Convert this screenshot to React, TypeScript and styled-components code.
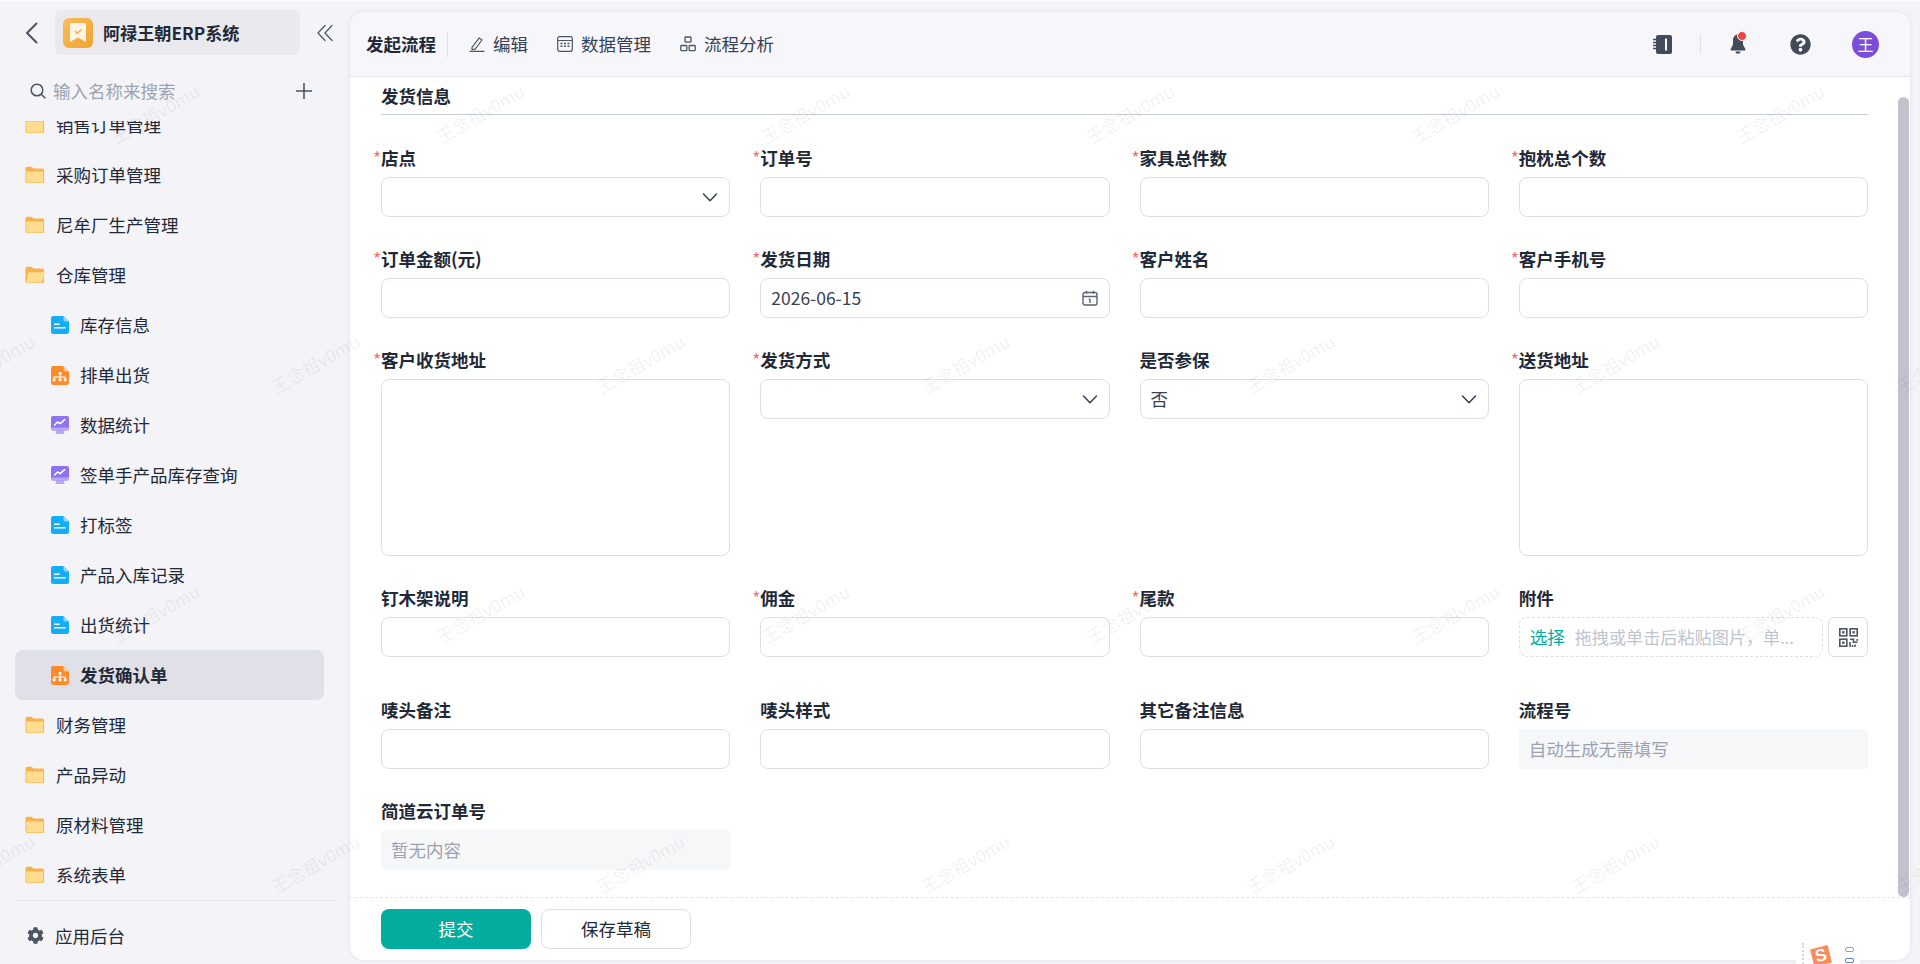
import styled, { createGlobalStyle } from "styled-components";
import { FaCog, FaQuestionCircle } from "react-icons/fa";

const GlobalStyle = createGlobalStyle`
    html, body {
        margin: 0;
        padding: 0;
        height: 100%;
        background: #f3f3f8;
    }
    * {
        box-sizing: border-box;
    }
    body {
        font-family: "Noto Sans CJK SC", "Noto Sans", sans-serif;
        font-size: 17.5px;
        color: #1f2937;
        overflow: hidden;
    }
`;

const Page = styled.div`
    position: relative;
    display: flex;
    height: 100vh;
    border-top: 1px solid #fbfbfd;
    overflow: hidden;
`;

/* sidebar */
const Sidebar = styled.aside`
    width: 350px;
    flex: none;
    display: flex;
    flex-direction: column;
`;

const BrandRow = styled.div`
    display: flex;
    align-items: center;
    height: 45px;
    margin-top: 9px;
    padding-left: 24px;
`;

const BackButton = styled.svg`
    width: 16px;
    height: 24px;
    margin-right: 15px;
    flex: none;
`;

const Brand = styled.div`
    width: 245px;
    height: 45px;
    display: flex;
    align-items: center;
    padding-left: 8px;
    gap: 10px;
    background: #e9e9ee;
    border-radius: 6px;
`;

const BrandLogo = styled.div`
    width: 30px;
    height: 30px;
    border-radius: 6px;
    background: linear-gradient(135deg, #f8bd5b, #efa42f);
    display: flex;
    align-items: center;
    justify-content: center;
`;

const BrandName = styled.span`
    font-weight: 700;
    font-size: 17.14px;
    color: #1f2937;
    white-space: nowrap;
`;

const Collapse = styled.svg`
    width: 16px;
    height: 18px;
    margin-left: 17px;
`;

const SearchRow = styled.div`
    display: flex;
    align-items: center;
    height: 36px;
    margin-top: 18px;
    padding-left: 30px;
    margin-bottom: 12px;
`;

const SearchText = styled.span`
    margin-left: 7px;
    color: #9ca3af;
    line-height: 36px;
    width: 243px;
`;

const MenuList = styled.div`
    flex: 1;
    min-height: 0;
    overflow: hidden;
`;

const MenuInner = styled.div`
    margin-top: -21px;
`;

const MenuRow = styled.div<{ $child?: boolean; $active?: boolean }>`
    display: flex;
    align-items: center;
    height: 50px;
    width: 309px;
    margin-left: 15px;
    padding-left: ${(p) => (p.$child ? "36px" : "10px")};
    gap: 11px;
    border-radius: 8px;
    background: ${(p) => (p.$active ? "#dfe0e8" : "transparent")};
    font-weight: ${(p) => (p.$active ? 700 : 400)};
    color: #1f2937;
    white-space: nowrap;
`;

const MenuLabel = styled.span`
    margin-top: -2px;
`;

const SideFooter = styled.div`
    height: 64px;
    margin: 0 15px;
    padding: 16px 0 0 10px;
    border-top: 1px solid #e5e6ec;
`;

const FooterRow = styled.div`
    display: flex;
    align-items: center;
    height: 36px;
    gap: 11px;
    color: #1f2937;
    svg {
        color: #4b5563;
        margin-left: 2px;
    }
`;

/* main card */
const Card = styled.main`
    position: relative;
    width: 1560px;
    flex: none;
    height: 948px;
    margin-top: 11px;
    display: flex;
    flex-direction: column;
    background: #ffffff;
    border-radius: 14px;
    box-shadow: 0 0 4px rgba(60, 60, 90, 0.1);
    overflow: hidden;
`;

const TopBar = styled.header`
    flex: none;
    height: 65px;
    display: flex;
    align-items: center;
    padding: 0 31px 0 16px;
    background: #f6f6fb;
    border-bottom: 1px solid #e4e6ec;
`;

const FlowTitle = styled.span`
    font-weight: 700;
    padding-right: 11px;
    margin-right: 21px;
    border-right: 1px solid #dcdee4;
    height: 25px;
    line-height: 23px;
`;

const TopTab = styled.div`
    display: flex;
    align-items: center;
    gap: 8px;
    margin-right: 29px;
    color: #374151;
`;

const TabLabel = styled.span`
    margin-top: -2px;
`;

const TopRight = styled.div`
    margin-left: auto;
    display: flex;
    align-items: center;
`;

const VLine = styled.div`
    width: 1px;
    height: 20px;
    background: #e0e2e8;
    margin: 0 29px 0 28px;
`;

const BellWrap = styled.div`
    position: relative;
    width: 16px;
    height: 20px;
    margin-right: 44px;
`;

const BellDot = styled.span`
    position: absolute;
    top: -3px;
    right: -1px;
    width: 8px;
    height: 8px;
    border-radius: 50%;
    background: #ef4444;
    border: 1px solid #f6f6fb;
    box-sizing: content-box;
`;

const Avatar = styled.div`
    width: 27px;
    height: 27px;
    margin-left: 41px;
    border-radius: 50%;
    background: #7c4ddb;
    color: #fff;
    font-size: 16px;
    display: flex;
    align-items: center;
    justify-content: center;
`;

const Body = styled.div`
    position: relative;
    flex: 1;
    min-height: 0;
    padding: 8px 42px 0 31px;
    overflow: hidden;
`;

const SectionTitle = styled.div`
    font-weight: 700;
    line-height: 22px;
    padding-bottom: 7px;
    border-bottom: 1px solid #c9ced6;
    margin-bottom: 32px;
`;

const FormGrid = styled.div`
    display: grid;
    grid-template-columns: repeat(4, 1fr);
    column-gap: 30px;
    row-gap: 31px;
`;

const Field = styled.div<{ $extra?: boolean }>`
    min-width: 0;
    padding-bottom: ${(p) => (p.$extra ? "11px" : 0)};
`;

const Label = styled.div`
    font-weight: 700;
    line-height: 22px;
    margin-bottom: 8px;
    color: #1f2937;
    white-space: nowrap;
`;

const Star = styled.span`
    color: #f56c6c;
    font-weight: 400;
    display: inline-block;
    width: 8px;
    margin-left: -8px;
`;

const InputBox = styled.div`
    height: 40px;
    display: flex;
    align-items: center;
    justify-content: space-between;
    padding: 0 11px 0 10px;
    border: 1px solid #dcdfe6;
    border-radius: 8px;
    color: #374151;
`;

const InputText = styled.span`
    margin-top: -2px;
`;

const TextBox = styled.div`
    height: 177px;
    border: 1px solid #dcdfe6;
    border-radius: 8px;
`;

const ReadOnly = styled.div`
    height: 40px;
    display: flex;
    align-items: center;
    padding: 0 10px 2px;
    background: #f6f7f9;
    border-radius: 4px;
    color: #9ca3af;
`;

const UploadRow = styled.div`
    display: flex;
    gap: 5px;
`;

const UploadBox = styled.div`
    flex: 1;
    min-width: 0;
    height: 40px;
    display: flex;
    align-items: center;
    gap: 10px;
    padding: 0 22px 2px 10px;
    border: 1px dashed #dcdfe6;
    border-radius: 8px;
`;

const UploadPick = styled.span`
    color: #04ab9f;
    flex: none;
`;

const UploadHint = styled.span`
    font-family: "Noto Sans", "Noto Sans CJK SC", sans-serif;
    font-size: 17.14px;
    color: #c0c4cc;
    white-space: nowrap;
    overflow: hidden;
    text-overflow: ellipsis;
`;

const QrButton = styled.div`
    width: 40px;
    height: 40px;
    flex: none;
    display: flex;
    align-items: center;
    justify-content: center;
    border: 1px solid #dcdfe6;
    border-radius: 6px;
`;

const ScrollThumb = styled.div`
    position: absolute;
    top: 20px;
    right: 1px;
    width: 11px;
    height: 800px;
    border-radius: 6px;
    background: #c1c3cc;
`;

const Footer = styled.footer`
    flex: none;
    height: 63px;
    display: flex;
    align-items: flex-start;
    gap: 10px;
    padding: 11px 0 0 31px;
    border-top: 1px dashed #e2e4e8;
`;

const Button = styled.div<{ $primary?: boolean }>`
    width: 150px;
    height: 40px;
    display: flex;
    align-items: center;
    justify-content: center;
    padding-bottom: 2px;
    border-radius: 8px;
    background: ${(p) => (p.$primary ? "#04ab9f" : "#fff")};
    color: ${(p) => (p.$primary ? "#fff" : "#1f2937")};
    border: ${(p) => (p.$primary ? "none" : "1px solid #dcdfe6")};
`;

/* watermark and input method badge lie over the page */
const WatermarkLayer = styled.div`
    position: absolute;
    inset: 0;
    pointer-events: none;
    overflow: hidden;
`;

const WatermarkRow = styled.div<{ $odd?: boolean }>`
    display: flex;
    height: 250px;
    margin-left: ${(p) => (p.$odd ? "-172px" : "-7px")};
    &:first-child {
        margin-top: -13px;
    }
`;

const Mark = styled.div`
    flex: none;
    width: 325px;
    height: 250px;
    display: flex;
    align-items: center;
    justify-content: center;
    color: rgba(0, 0, 0, 0.065);
    font-size: 17.5px;
    white-space: nowrap;
    span {
        transform: rotate(-30deg);
    }
`;

const ImeBadge = styled.div`
    position: absolute;
    right: 60px;
    bottom: 0;
    width: 64px;
    height: 21px;
    background: #fff;
    overflow: hidden;
    display: flex;
    padding-left: 6px;
`;

const ImeDots = styled.div`
    width: 2px;
    height: 21px;
    border-left: 2px dotted #d1d5db;
`;

const ImeLogo = styled.div`
    width: 18px;
    height: 18px;
    margin: 4px 0 0 8px;
    background: #f98b5c;
    color: #fff;
    font-family: "Liberation Sans", sans-serif;
    font-weight: 700;
    font-size: 17px;
    line-height: 18px;
    text-align: center;
    transform: rotate(-14deg);
`;

const ImeSide = styled.div`
    margin: 4px 0 0 15px;
    display: flex;
    flex-direction: column;
    gap: 6px;
`;

const ImeMark = styled.div<{ $color: string }>`
    width: 9px;
    height: 5px;
    border: 1.5px solid ${(p) => p.$color};
    border-radius: 2px;
`;

const IconSvg = styled.svg`
    flex: none;
`;

/* icons */
const Folder = ({ open }: { open?: boolean }) => (
    <IconSvg width="20" height="18" viewBox="0 0 20 18">
        <path d="M0.5 2.5A1.8 1.8 0 0 1 2.3.7h4.4l1.8 1.9h8.8a1.8 1.8 0 0 1 1.8 1.8v11a1.7 1.7 0 0 1-1.7 1.7H2.2A1.7 1.7 0 0 1 .5 15.6z" fill="#f6b24e" />
        {open ? (
            <path d="M4.3 6.2h14.2a1 1 0 0 1 1 1.3l-2.2 8.1a1.4 1.4 0 0 1-1.3 1H2.5a1 1 0 0 1-1-1.2l1.7-8.3a1.2 1.2 0 0 1 1.1-.9z" fill="#ffdc8f" />
        ) : (
            <path d="M1.3 5.4h16.9v10a1 1 0 0 1-1 1H2.3a1 1 0 0 1-1-1z" fill="#ffdc8f" />
        )}
    </IconSvg>
);

const DocIcon = () => (
    <IconSvg width="18" height="18" viewBox="0 0 18 18">
        <path d="M2.2 0h10.3L18 5.5v10.3a2.2 2.2 0 0 1-2.2 2.2H2.2A2.2 2.2 0 0 1 0 15.8V2.2A2.2 2.2 0 0 1 2.2 0z" fill="#14aef8" />
        <path d="M12.5 0L18 5.5h-3.7a1.8 1.8 0 0 1-1.8-1.8z" fill="#8fd8fc" />
        <path d="M3 7.4h5.6v1.6H3zM3 11h11.6v1.6H3z" fill="#fff" />
    </IconSvg>
);

const OrgIcon = () => (
    <IconSvg width="18" height="19" viewBox="0 0 18 19">
        <path d="M2.2 0h10.3L18 5.5v11.3a2.2 2.2 0 0 1-2.2 2.2H2.2A2.2 2.2 0 0 1 0 16.8V2.2A2.2 2.2 0 0 1 2.2 0z" fill="#ff8a2a" />
        <path d="M12.5 0L18 5.5h-3.7a1.8 1.8 0 0 1-1.8-1.8z" fill="#ffc89a" />
        <path d="M7.6 6h2.8v2.8h-.9v1.6h4.9v2.1h1.2v2.8h-2.8v-2.8h.9v-1.1H9.5v1.1h.9v2.8H7.6v-2.8h.9v-1.1H3.6v1.1h.9v2.8H1.7v-2.8h.9v-2.1h5.9V8.8h-.9z" fill="#fff" />
    </IconSvg>
);

const ChartIcon = () => (
    <IconSvg width="18" height="18" viewBox="0 0 18 18">
        <path d="M5.5 14h7l1 4h-9z" fill="#b9a7f8" />
        <rect width="18" height="14.5" rx="2" fill="#8f72ef" />
        <path d="M0 11.5h18v1a2 2 0 0 1-2 2H2a2 2 0 0 1-2-2z" fill="#b9a7f8" />
        <path d="M3.6 9l3-3 2.5 1.7 4.6-4" fill="none" stroke="#fff" strokeWidth="1.6" strokeLinecap="round" strokeLinejoin="round" />
    </IconSvg>
);

const Chevron = () => (
    <svg width="16" height="9" viewBox="0 0 16 9" fill="none" stroke="#374151" strokeWidth="1.5" strokeLinecap="round" strokeLinejoin="round">
        <path d="M1.5 1L8 7.8 14.5 1" />
    </svg>
);

const CalendarIcon = () => (
    <svg width="16" height="16" viewBox="0 0 16 16" fill="none" stroke="#5b6472" strokeWidth="1.4">
        <rect x="1" y="2.5" width="14" height="12.5" rx="2" />
        <path d="M1 6.5h14M4.5.8v3M11.5.8v3M8 9v4M6.8 9.5L8 9" />
    </svg>
);

const EditIcon = () => (
    <svg width="16" height="17" viewBox="0 0 17 17" fill="none" stroke="#4b5563" strokeWidth="1.2" strokeLinejoin="round">
        <path d="M3.2 11.5L10.8 1.5l3 2.2-7.2 9.7-3.5.6z" />
        <path d="M1 15.8h15" strokeLinecap="round" />
    </svg>
);

const TableIcon = () => (
    <svg width="16" height="16" viewBox="0 0 16 16" fill="none" stroke="#4b5563" strokeWidth="1.2">
        <rect x=".7" y=".7" width="14.6" height="14.6" rx="2" />
        <path d="M.7 4.5h14.6" />
        <path d="M3.5 7.5h2M7 7.5h2M10.5 7.5h2M3.5 10.2h2M7 10.2h2M10.5 10.2h2" strokeWidth="1.4" />
    </svg>
);

const FlowIcon = () => (
    <svg width="16" height="16" viewBox="0 0 16 16" fill="none" stroke="#4b5563" strokeWidth="1.3">
        <rect x="5" y="1" width="6" height="5.2" rx=".8" />
        <rect x=".8" y="9.5" width="6" height="5.2" rx=".8" />
        <rect x="9.2" y="9.5" width="6" height="5.2" rx=".8" />
    </svg>
);

const NotebookIcon = () => (
    <svg width="19" height="19" viewBox="0 0 19 19">
        <path d="M3 2a2 2 0 0 1 2-2h12a2 2 0 0 1 2 2v15a2 2 0 0 1-2 2H5a2 2 0 0 1-2-2z" fill="#434b59" />
        <path d="M0 4.5h3.5M0 7.5h3.5M0 10.5h3.5M0 13.5h3.5" stroke="#434b59" strokeWidth="1.4" />
        <rect x="12" y="3.5" width="2" height="12" fill="#f6f6fb" />
    </svg>
);

const BellIcon = () => (
    <svg width="16" height="20" viewBox="0 0 16 20">
        <path d="M8 .5c-3 0-5 2.6-5 5.6v4.4L.6 15.3a.8.8 0 0 0 .7 1.2h13.4a.8.8 0 0 0 .7-1.2L13 10.5V6.1C13 3.1 11 .5 8 .5z" fill="#434b59" />
        <path d="M5.5 17.5h5a2.5 2.3 0 0 1-5 0z" fill="#434b59" />
    </svg>
);

const QrIcon = () => (
    <svg width="19" height="19" viewBox="0 0 19 19" fill="none" stroke="#4b5563" strokeWidth="1.6">
        <rect x=".8" y=".8" width="7" height="7" />
        <rect x="11.2" y=".8" width="7" height="7" />
        <rect x=".8" y="11.2" width="7" height="7" />
        <path d="M3.3 3.3h2v2h-2zM13.7 3.3h2v2h-2zM3.3 13.7h2v2h-2z" fill="#4b5563" strokeWidth=".4" />
        <path d="M11 11.2h3.5v3h4M11 14v5M13.5 17v2M16 16.5V19M18.3 11v2" />
    </svg>
);

const menu = [
    { name: "销售订单管理", kind: "folder" },
    { name: "采购订单管理", kind: "folder" },
    { name: "尼牟厂生产管理", kind: "folder" },
    { name: "仓库管理", kind: "open" },
    { name: "库存信息", kind: "doc" },
    { name: "排单出货", kind: "org" },
    { name: "数据统计", kind: "chart" },
    { name: "签单手产品库存查询", kind: "chart" },
    { name: "打标签", kind: "doc" },
    { name: "产品入库记录", kind: "doc" },
    { name: "出货统计", kind: "doc" },
    { name: "发货确认单", kind: "org", active: true },
    { name: "财务管理", kind: "folder" },
    { name: "产品异动", kind: "folder" },
    { name: "原材料管理", kind: "folder" },
    { name: "系统表单", kind: "folder" },
];

const menuIcon = (kind: string) => {
    if (kind === "folder") return <Folder />;
    if (kind === "open") return <Folder open />;
    if (kind === "doc") return <DocIcon />;
    if (kind === "org") return <OrgIcon />;
    return <ChartIcon />;
};

type FieldDef = {
    label: string;
    required?: boolean;
    type?: "input" | "select" | "date" | "area" | "upload" | "readonly";
    value?: string;
};

const fields: FieldDef[] = [
    { label: "店点", required: true, type: "select" },
    { label: "订单号", required: true },
    { label: "家具总件数", required: true },
    { label: "抱枕总个数", required: true },
    { label: "订单金额(元)", required: true },
    { label: "发货日期", required: true, type: "date", value: "2026-06-15" },
    { label: "客户姓名", required: true },
    { label: "客户手机号", required: true },
    { label: "客户收货地址", required: true, type: "area" },
    { label: "发货方式", required: true, type: "select" },
    { label: "是否参保", type: "select", value: "否" },
    { label: "送货地址", required: true, type: "area" },
    { label: "钉木架说明" },
    { label: "佣金", required: true },
    { label: "尾款", required: true },
    { label: "附件", type: "upload" },
    { label: "唛头备注" },
    { label: "唛头样式" },
    { label: "其它备注信息" },
    { label: "流程号", type: "readonly", value: "自动生成无需填写" },
    { label: "简道云订单号", type: "readonly", value: "暂无内容" },
];

const FieldControl = ({ field }: { field: FieldDef }) => {
    switch (field.type) {
        case "select":
            return (
                <InputBox>
                    <InputText>{field.value}</InputText>
                    <Chevron />
                </InputBox>
            );
        case "date":
            return (
                <InputBox>
                    <InputText>{field.value}</InputText>
                    <CalendarIcon />
                </InputBox>
            );
        case "area":
            return <TextBox />;
        case "readonly":
            return <ReadOnly>{field.value}</ReadOnly>;
        case "upload":
            return (
                <UploadRow>
                    <UploadBox>
                        <UploadPick>选择</UploadPick>
                        <UploadHint>拖拽或单击后粘贴图片，单个文件不超过20MB</UploadHint>
                    </UploadBox>
                    <QrButton>
                        <QrIcon />
                    </QrButton>
                </UploadRow>
            );
        default:
            return <InputBox />;
    }
};

const App = () => {
    return (
        <Page>
            <GlobalStyle />
            <Sidebar>
                <BrandRow>
                    <BackButton viewBox="0 0 16 24" fill="none" stroke="#4b5563" strokeWidth="2" strokeLinecap="round" strokeLinejoin="round">
                        <path d="M12.5 2.5L3 12l9.5 9.5" />
                    </BackButton>
                    <Brand>
                        <BrandLogo>
                            <svg width="16" height="20" viewBox="0 0 16 20">
                                <path d="M1 0h14a1 1 0 0 1 1 1v18l-8-4.5L0 19V1a1 1 0 0 1 1-1z" fill="#fff5e2" />
                                <path d="M5 8l2.3 2.2L11.5 6.5" fill="none" stroke="#f2ad44" strokeWidth="1.5" />
                            </svg>
                        </BrandLogo>
                        <BrandName>阿禄王朝ERP系统</BrandName>
                    </Brand>
                    <Collapse viewBox="0 0 16 18" fill="none" stroke="#4b5563" strokeWidth="1.2" strokeLinecap="round" strokeLinejoin="round">
                        <path d="M8 1.5L1 9l7 7.5M15 1.5L8 9l7 7.5" />
                    </Collapse>
                </BrandRow>
                <SearchRow>
                    <svg width="16" height="16" viewBox="0 0 16 16" fill="none" stroke="#4b5563" strokeWidth="1.5" strokeLinecap="round">
                        <circle cx="7" cy="7" r="5.8" />
                        <path d="M11.3 11.3L15 15" />
                    </svg>
                    <SearchText>输入名称来搜索</SearchText>
                    <svg width="16" height="16" viewBox="0 0 16 16" fill="none" stroke="#4b5563" strokeWidth="1.6">
                        <path d="M8 0v16M0 8h16" />
                    </svg>
                </SearchRow>
                <MenuList>
                    <MenuInner>
                        {menu.map((m) => (
                            <MenuRow
                                key={m.name}
                                $child={m.kind !== "folder" && m.kind !== "open"}
                                $active={m.active}
                            >
                                {menuIcon(m.kind)}
                                <MenuLabel>{m.name}</MenuLabel>
                            </MenuRow>
                        ))}
                    </MenuInner>
                </MenuList>
                <SideFooter>
                    <FooterRow>
                        <FaCog size={17} />
                        应用后台
                    </FooterRow>
                </SideFooter>
            </Sidebar>

            <Card>
                <TopBar>
                    <FlowTitle>发起流程</FlowTitle>
                    <TopTab>
                        <EditIcon />
                        <TabLabel>编辑</TabLabel>
                    </TopTab>
                    <TopTab>
                        <TableIcon />
                        <TabLabel>数据管理</TabLabel>
                    </TopTab>
                    <TopTab>
                        <FlowIcon />
                        <TabLabel>流程分析</TabLabel>
                    </TopTab>
                    <TopRight>
                        <NotebookIcon />
                        <VLine />
                        <BellWrap>
                            <BellIcon />
                            <BellDot />
                        </BellWrap>
                        <FaQuestionCircle size={21} color="#434b59" />
                        <Avatar>王</Avatar>
                    </TopRight>
                </TopBar>
                <Body>
                    <SectionTitle>发货信息</SectionTitle>
                    <FormGrid>
                        {fields.map((f) => (
                            <Field key={f.label} $extra={f.type === "upload"}>
                                <Label>
                                    {f.required && <Star>*</Star>}
                                    {f.label}
                                </Label>
                                <FieldControl field={f} />
                            </Field>
                        ))}
                    </FormGrid>
                    <ScrollThumb />
                </Body>
                <Footer>
                    <Button $primary>提交</Button>
                    <Button>保存草稿</Button>
                </Footer>
            </Card>

            <WatermarkLayer>
                {[0, 1, 2, 3].map((row) => (
                    <WatermarkRow key={row} $odd={row % 2 === 1}>
                        {[0, 1, 2, 3, 4, 5, 6].map((col) => (
                            <Mark key={col}>
                                <span>王念祖v0mu</span>
                            </Mark>
                        ))}
                    </WatermarkRow>
                ))}
            </WatermarkLayer>

            <ImeBadge>
                <ImeDots />
                <ImeLogo>S</ImeLogo>
                <ImeSide>
                    <ImeMark $color="#9aa0ab" />
                    <ImeMark $color="#5b7fb8" />
                </ImeSide>
            </ImeBadge>
        </Page>
    );
};

export default App;
